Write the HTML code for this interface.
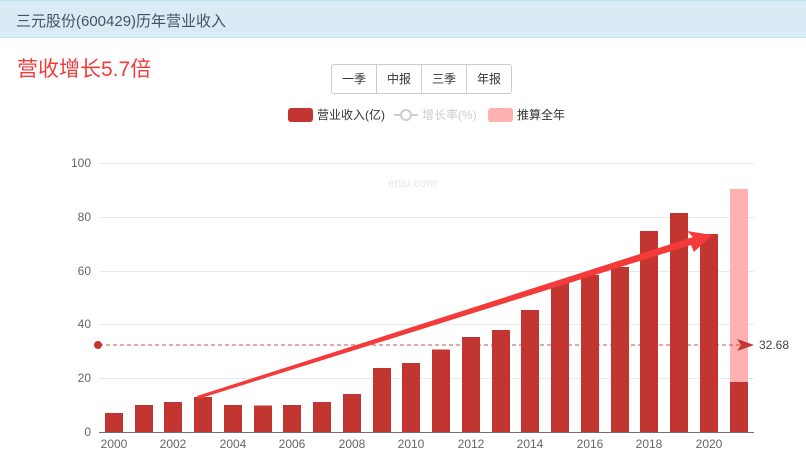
<!DOCTYPE html>
<html><head><meta charset="utf-8"><style>
body{margin:0;width:806px;height:457px;overflow:hidden;background:#fff;font-family:"Liberation Sans","Noto Sans CJK SC",sans-serif;}
.hd{position:absolute;left:0;top:0;width:806px;height:38px;background:#d9ecf5;border-top:1px solid #bfe3f0;border-bottom:1px solid #c3e5f1;box-sizing:border-box;}
.hd span{position:absolute;left:16px;top:9px;font-size:15px;color:#3f5462;}
.big{position:absolute;left:17px;top:53px;font-size:21px;color:#f23b3b;}
.btns{position:absolute;left:331px;top:64px;height:28px;display:flex;border:1px solid #ccc;border-radius:3px;}
.btns div{width:44px;text-align:center;line-height:28px;font-size:12px;color:#333;border-right:1px solid #ccc;}
.btns div:last-child{border-right:none}
</style></head><body>
<div class="hd"><span>三元股份(600429)历年营业收入</span></div>
<div class="big">营收增长5.7倍</div>
<div class="btns"><div>一季</div><div>中报</div><div>三季</div><div>年报</div></div>
<svg width="806" height="457" style="position:absolute;left:0;top:0" font-family="Liberation Sans, Noto Sans CJK SC, sans-serif">
<rect x="288" y="108" width="25" height="14" rx="3" fill="#c23531"/>
<text x="317" y="119" font-size="12" fill="#333">营业收入(亿)</text>
<line x1="394" y1="115" x2="418" y2="115" stroke="#ccc" stroke-width="2"/>
<circle cx="406" cy="115" r="5" fill="#fff" stroke="#ccc" stroke-width="2"/>
<text x="422" y="119" font-size="12" fill="#ccc">增长率(%)</text>
<rect x="488" y="108" width="25" height="14" rx="3" fill="#ffb0b0"/>
<text x="517" y="119" font-size="12" fill="#333">推算全年</text>
<g stroke="#e6eaf0" stroke-width="1">
<line x1="99" y1="163.5" x2="754" y2="163.5"/><line x1="99" y1="217.5" x2="754" y2="217.5"/><line x1="99" y1="271.5" x2="754" y2="271.5"/><line x1="99" y1="324.5" x2="754" y2="324.5"/><line x1="99" y1="378.5" x2="754" y2="378.5"/>
</g>
<g font-size="12" fill="#666" text-anchor="end">
<text x="91" y="167">100</text><text x="91" y="221">80</text><text x="91" y="275">60</text><text x="91" y="328">40</text><text x="91" y="382">20</text><text x="91" y="436">0</text>
</g>
<text x="388" y="187" font-size="12" fill="#e6e6e6">eniu.com</text>
<rect x="730" y="189" width="18" height="243" fill="#ffb0b0"/>
<g fill="#c23531">
<rect x="105" y="413" width="18" height="19"/>
<rect x="135" y="405" width="18" height="27"/>
<rect x="164" y="402" width="18" height="30"/>
<rect x="194" y="397" width="18" height="35"/>
<rect x="224" y="405" width="18" height="27"/>
<rect x="254" y="405.5" width="18" height="26.5"/>
<rect x="283" y="405" width="18" height="27"/>
<rect x="313" y="402" width="18" height="30"/>
<rect x="343" y="394" width="18" height="38"/>
<rect x="373" y="368" width="18" height="64"/>
<rect x="402" y="363" width="18" height="69"/>
<rect x="432" y="349.5" width="18" height="82.5"/>
<rect x="462" y="337" width="18" height="95"/>
<rect x="492" y="330" width="18" height="102"/>
<rect x="521" y="310" width="18" height="122"/>
<rect x="551" y="283" width="18" height="149"/>
<rect x="581" y="275" width="18" height="157"/>
<rect x="611" y="267" width="18" height="165"/>
<rect x="640" y="231" width="18" height="201"/>
<rect x="670" y="213" width="18" height="219"/>
<rect x="700" y="234" width="18" height="198"/>
<rect x="730" y="382" width="18" height="50"/>
</g>
<line x1="99" y1="432.5" x2="754" y2="432.5" stroke="#6e7079"/>
<g font-size="12" fill="#666" text-anchor="middle">
<text x="114" y="448">2000</text><text x="173" y="448">2002</text><text x="233" y="448">2004</text><text x="292" y="448">2006</text><text x="352" y="448">2008</text><text x="411" y="448">2010</text><text x="471" y="448">2012</text><text x="530" y="448">2014</text><text x="590" y="448">2016</text><text x="649" y="448">2018</text><text x="709" y="448">2020</text>
</g>
<line x1="99" y1="345" x2="740" y2="345" stroke="#c23531" stroke-dasharray="4,3" opacity="0.85"/>
<circle cx="98" cy="345" r="4" fill="#c23531"/>
<path d="M737 339 L754 345 L737 351 L741 345 Z" fill="#c23531"/>
<text x="759" y="349" font-size="12" fill="#444">32.68</text>
<path d="M197 396 L693 237 L687 231 L712 235 L694 252 L691 245 L198 399 Z" fill="#f53a3a"/>
</svg>
</body></html>
